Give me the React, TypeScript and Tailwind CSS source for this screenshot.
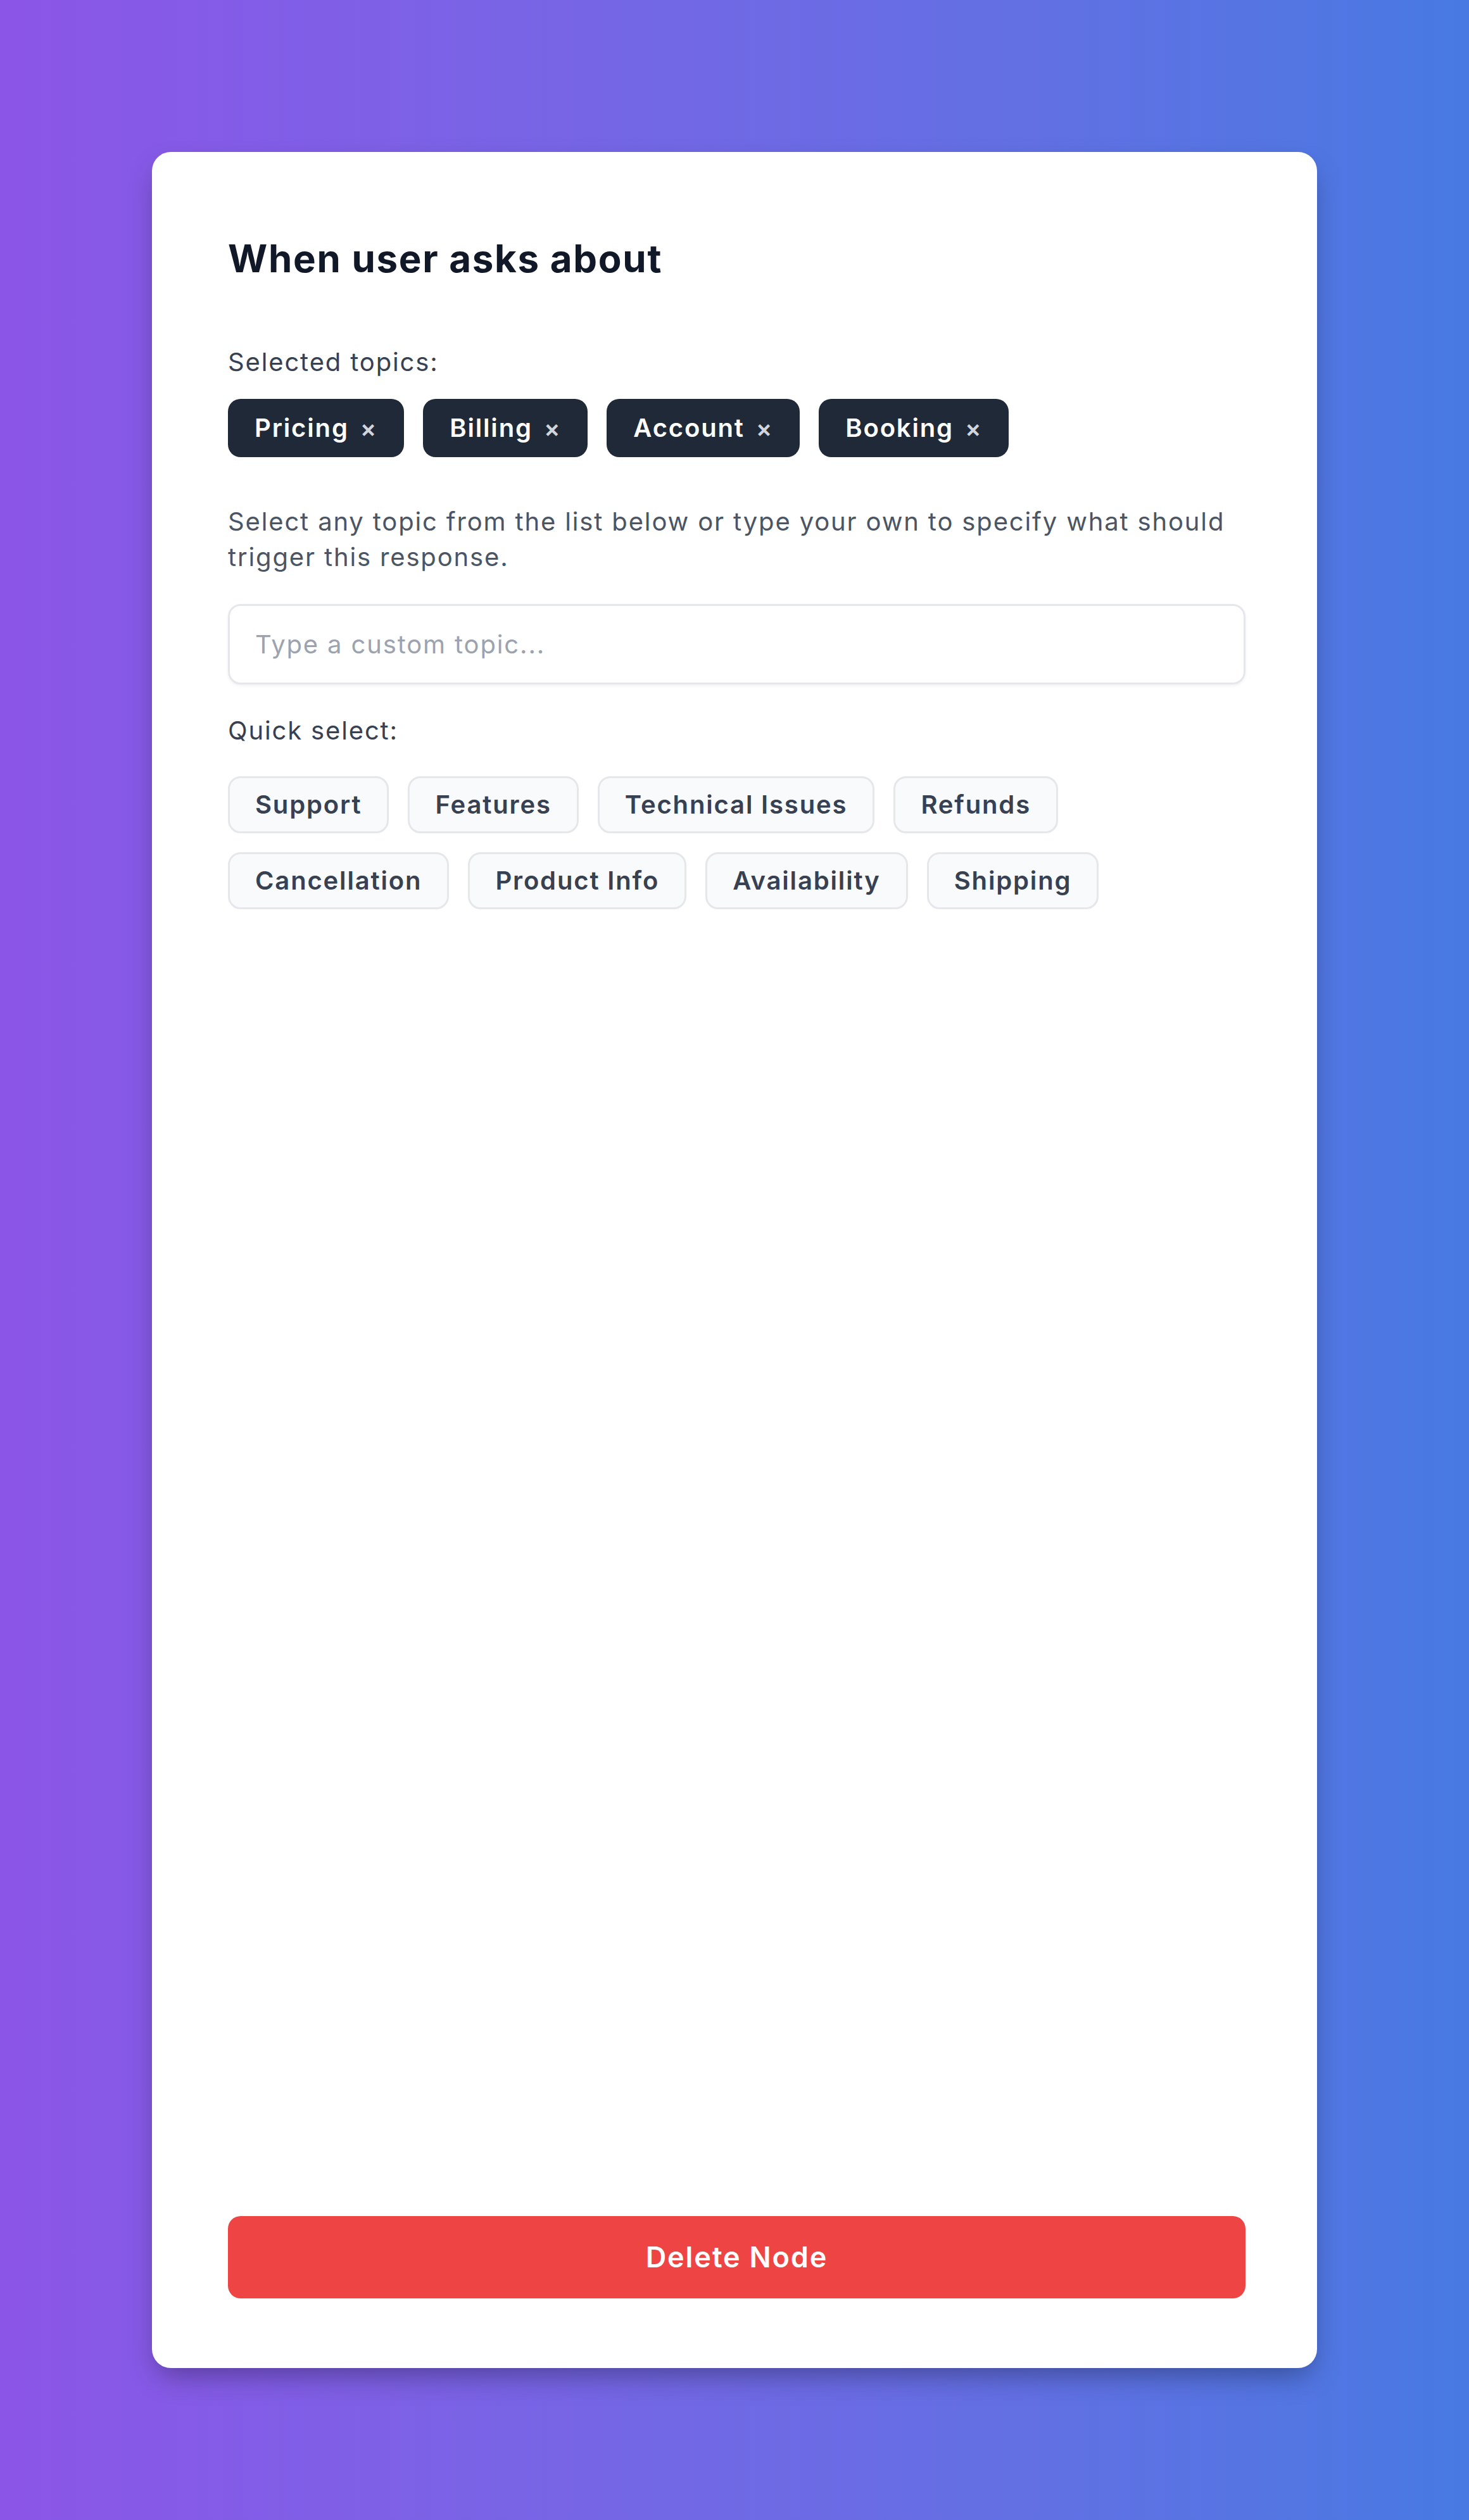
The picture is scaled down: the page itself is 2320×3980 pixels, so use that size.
import { useState } from "react";

const SELECTED = ["Pricing", "Billing", "Account", "Booking"];
const QUICK = [
  "Support",
  "Features",
  "Technical Issues",
  "Refunds",
  "Cancellation",
  "Product Info",
  "Availability",
  "Shipping",
];

const App = () => {
  const [topics, setTopics] = useState<string[]>(SELECTED);
  const [custom, setCustom] = useState("");

  const removeTopic = (t: string) => {
    setTopics(topics.filter((x) => x !== t));
  };

  const addTopic = (t: string) => {
    if (!topics.includes(t)) setTopics([...topics, t]);
  };

  return (
    <div
      className="h-[3980px] w-full bg-gradient-to-r from-[#8b55e7] to-[#4779e2] p-[240px] tracking-[1.85px]"
      style={{ fontFamily: "Inter, 'Noto Sans', sans-serif" }}
    >
      <div className="flex h-full flex-col rounded-[30px] bg-white pt-[128px] pr-[113px] pb-[110px] pl-[120px] shadow-[0_20px_45px_-10px_rgba(0,0,0,0.35)]">
        <h2 className="mb-[96px] text-[60px] leading-[80px] font-bold tracking-[1.7px] text-[#111827]">
          When user asks about
        </h2>

        <p className="mb-[30px] text-[40px] leading-[56px] text-[#374151]">Selected topics:</p>
        <div className="flex flex-wrap gap-[30px]">
          {topics.map((t) => (
            <span
              key={t}
              className="flex items-center gap-[18px] rounded-[20px] bg-[#1f2937] px-[42px] py-[16px] text-[40px] leading-[60px] font-semibold text-white"
            >
              {t}
              <button
                onClick={() => removeTopic(t)}
                className="text-[38px] leading-[60px] font-semibold text-[#d1d5db]"
              >
                ×
              </button>
            </span>
          ))}
        </div>

        <p className="mt-[74px] text-[40px] leading-[56px] text-[#4b5563]">
          Select any topic from the list below or type your own to specify what should trigger this
          response.
        </p>

        <input
          value={custom}
          onChange={(e) => setCustom(e.target.value)}
          placeholder="Type a custom topic..."
          className="mt-[46px] h-[127px] w-full rounded-[20px] border-[3px] border-[#e5e7eb] px-[40px] text-[40px] tracking-[1.85px] text-[#111827] shadow-[0_2px_5px_rgba(0,0,0,0.06)] outline-none placeholder:text-[#9ca3af]"
        />

        <p className="mt-[45px] text-[40px] leading-[56px] text-[#374151]">Quick select:</p>
        <div className="mt-[44px] flex flex-wrap gap-[30px]">
          {QUICK.map((t) => (
            <button
              key={t}
              onClick={() => addTopic(t)}
              className="rounded-[20px] border-[3px] border-[#e5e7eb] bg-[#f9fafb] px-[40px] py-[12px] text-[40px] leading-[60px] font-semibold tracking-[1.85px] text-[#374151]"
            >
              {t}
            </button>
          ))}
        </div>

        <div className="flex-1" />

        <button className="h-[130px] w-full rounded-[20px] bg-[#ef4444] text-[45px] leading-[70px] font-semibold tracking-[1.85px] text-white">
          Delete Node
        </button>
      </div>
    </div>
  );
};

export default App;
